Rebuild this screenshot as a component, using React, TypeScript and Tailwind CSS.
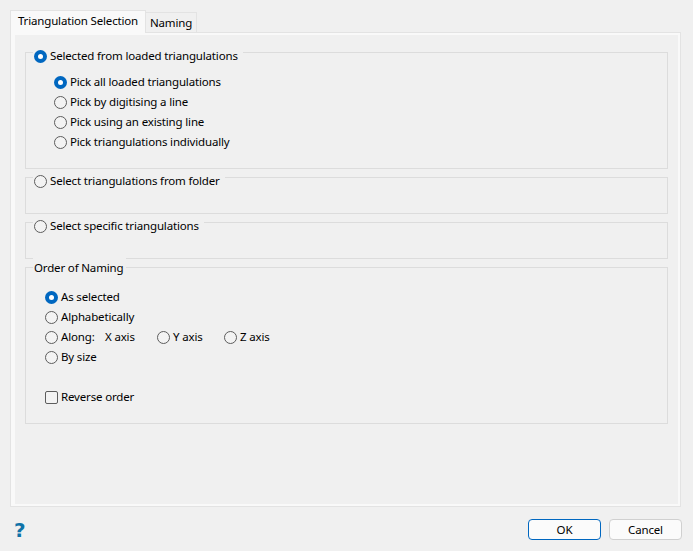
const font = "font-['Noto_Sans',sans-serif] text-[11.5px] tracking-[-0.16px]";

function Radio({ label, checked }: { label?: string; checked?: boolean }) {
  return (
    <span className="flex items-center h-[20px] gap-[3px] text-black">
      <span
        className={
          checked
            ? 'w-[13px] h-[13px] rounded-full bg-[#0067c0] flex items-center justify-center'
            : 'w-[13px] h-[13px] rounded-full border border-[#5d5d5d] bg-[#f3f3f3]'
        }
      >
        {checked && <span className="w-[5px] h-[5px] rounded-full bg-white" />}
      </span>
      {label && <span>{label}</span>}
    </span>
  );
}

function Group({ legend, className, children }: { legend: React.ReactNode; className: string; children?: React.ReactNode }) {
  return (
    <div className={`border border-[#dcdcdc] flex flex-col items-start ${className}`}>
      {legend}
      {children}
    </div>
  );
}

function RadioLegend({ label, checked }: { label: string; checked?: boolean }) {
  return (
    <div className="-mt-[7px] ml-[7px] pl-[1px] pr-[5px] bg-[#f0f0f0]">
      <Radio label={label} checked={checked} />
    </div>
  );
}

export default function App() {
  return (
    <div className={`${font} w-[693px] h-[551px] bg-[#f0f0f0] overflow-hidden flex flex-col text-black`}>
      <div className="flex items-start pl-[10px] pt-[10px] h-[33px] shrink-0 relative z-10">
        <div className="h-[23px] w-[136px] bg-[#f9f9f9] border border-b-0 border-[#e3e3e3] flex items-center justify-center pb-[2px]">
          Triangulation Selection
        </div>
        <div className="mt-[2px] h-[20px] w-[51px] bg-[#f0f0f0] border border-l-0 border-b-0 border-[#e3e3e3] flex items-center justify-center">
          Naming
        </div>
      </div>
      <div className="-mt-px ml-[10px] w-[671px] h-[475px] shrink-0 border border-[#e3e3e3] bg-[#f9f9f9] pl-[4px] pr-[2px] pt-[2px] pb-[2px]">
        <div className="h-full bg-[#f0f0f0] pl-[10px] pr-[10px] pt-[17px] flex flex-col gap-[8px]">
          <Group legend={<RadioLegend label="Selected from loaded triangulations" checked />} className="h-[117px]">
            <div className="pt-[6px] pl-[28px]">
              <Radio label="Pick all loaded triangulations" checked />
              <Radio label="Pick by digitising a line" />
              <Radio label="Pick using an existing line" />
              <Radio label="Pick triangulations individually" />
            </div>
          </Group>
          <Group legend={<RadioLegend label="Select triangulations from folder" />} className="h-[37px]" />
          <Group legend={<RadioLegend label="Select specific triangulations" />} className="h-[37px]" />
          <Group
            legend={
              <div className="-mt-[10px] ml-[7px] pl-[1px] pr-[3px] h-[20px] flex items-center bg-[#f0f0f0]">Order of Naming</div>
            }
            className="h-[157px]"
          >
            <div className="pl-[19px] pt-[9px]">
              <Radio label="As selected" checked />
              <Radio label="Alphabetically" />
              <div className="flex">
                <span className="w-[60px]"><Radio label="Along:" /></span>
                <span className="w-[52px] h-[20px] flex items-center">X axis</span>
                <span className="w-[67px]"><Radio label="Y axis" /></span>
                <Radio label="Z axis" />
              </div>
              <Radio label="By size" />
              <div className="h-[20px]" />
              <span className="flex items-center h-[20px] gap-[3px]">
                <span className="w-[13px] h-[13px] rounded-[2px] border border-[#5d5d5d] bg-[#f3f3f3]" />
                Reverse order
              </span>
            </div>
          </Group>
        </div>
      </div>
      <div className="flex items-start justify-between pl-[14px] pr-[11px] pt-[12px]">
        <span className="mt-[1px] font-['DejaVu_Sans',sans-serif] font-bold text-[20px] leading-[20px] tracking-normal text-[#0f73a8]">?</span>
        <div className="flex gap-[8px]">
          <button className="w-[73px] h-[21px] rounded-[4px] border border-[#0067c0] bg-[#fbfbfb]">OK</button>
          <button className="w-[73px] h-[21px] rounded-[4px] border border-[#d0d0d0] bg-[#fbfbfb]">Cancel</button>
        </div>
      </div>
    </div>
  );
}
